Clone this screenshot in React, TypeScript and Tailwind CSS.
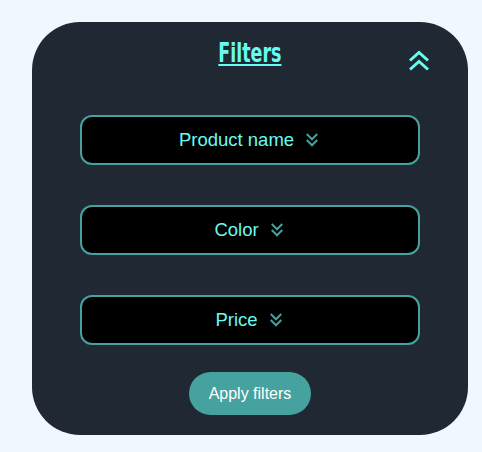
import { useState } from 'react';

function ChevronsDown({ className }: { className?: string }) {
    return (
        <svg
            viewBox="0 0 24 24"
            className={className}
            fill="none"
            stroke="currentColor"
            strokeWidth={2.6}
        >
            <polyline points="5 4 12 11 19 4" />
            <polyline points="5 12 12 19 19 12" />
        </svg>
    );
}

function ChevronsUp({ className }: { className?: string }) {
    return (
        <svg
            viewBox="0 0 24 22"
            className={className}
            fill="none"
            stroke="currentColor"
            strokeWidth={3}
        >
            <polyline points="3 10.5 12 2.5 21 10.5" />
            <polyline points="3 19.5 12 11.5 21 19.5" />
        </svg>
    );
}

const filters = ['Product name', 'Color', 'Price'];

function App() {
    const [open, setOpen] = useState(true);

    return (
        <div className="min-h-[452px] w-full bg-[#f0f7ff] pt-[22px] pl-[32px] font-['Liberation_Sans',Arial,sans-serif]">
            <div className="relative flex w-[436px] flex-col items-center rounded-[48px] bg-[#1f2833] pt-[13px] pb-[20px]">
                {/* Header */}
                <h2 className="scale-x-[0.72] text-[27px] leading-[36px] font-bold text-[#66fcf1] underline decoration-2 underline-offset-[2px] font-['DejaVu_Sans_Condensed',sans-serif]">
                    Filters
                </h2>
                <button
                    onClick={() => setOpen(!open)}
                    className="absolute top-[28px] right-[37px] text-[#66fcf1]"
                >
                    <ChevronsUp className="h-[22px] w-[24px]" />
                </button>

                {/* Filter list */}
                <div className="mt-[44px] flex flex-col gap-[40px]">
                    {filters.map((f) => (
                        <button
                            key={f}
                            className="flex h-[50px] w-[340px] items-center justify-center gap-[9px] rounded-xl border-2 border-[#45a29e] bg-black text-[18.5px] text-[#66fcf1]"
                        >
                            <span>{f}</span>
                            <ChevronsDown className="h-[18px] w-[18px] text-[#45a29e]" />
                        </button>
                    ))}
                </div>

                <button className="mt-[27px] h-[43px] rounded-full bg-[#45a29e] px-[20px] text-[16px] text-white">
                    Apply filters
                </button>
            </div>
        </div>
    );
}

export default App;
